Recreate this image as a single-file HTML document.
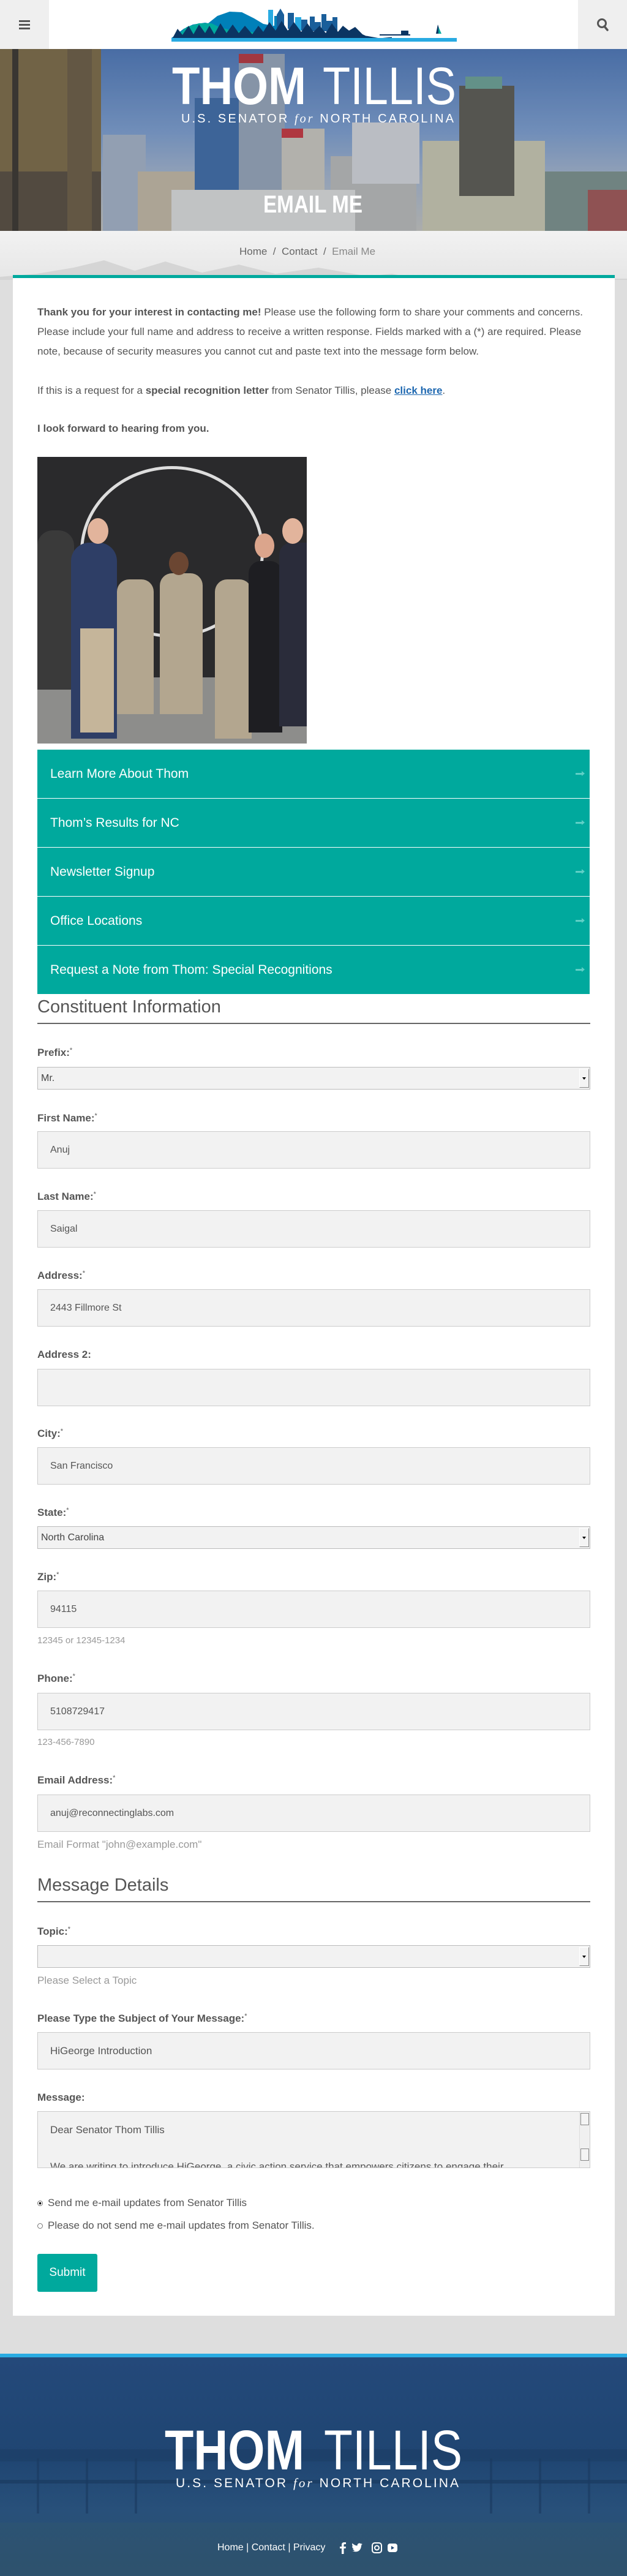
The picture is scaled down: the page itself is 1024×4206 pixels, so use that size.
<!DOCTYPE html>
<html><head><meta charset="utf-8">
<style>
*{margin:0;padding:0;box-sizing:border-box}
body{width:1024px;height:4206px;background:#dedede;position:relative;overflow:hidden;font-family:"Liberation Sans Narrow","Liberation Sans",sans-serif;color:#555}
.abs{position:absolute}
.hdr{left:0;top:0;width:1024px;height:80px;background:#fff}
.gbox{top:0;width:80px;height:80px;background:#efefef}
.hero{left:0;top:80px;width:1024px;height:297px;overflow:hidden;background:linear-gradient(#4f74ad,#7f9cc6 45%,#a9b4c4 70%,#c8c2b5)}
.bc{left:0;top:377px;width:1024px;height:80px;background:linear-gradient(#f2f2f2,#e6e6e6)}
.card{left:21px;top:449px;width:983px;height:3332px;background:#fff;border-top:5px solid #00a99d}
.p{left:61px;width:910px;font-size:17px;line-height:32px;color:#555}
.btn{left:61px;width:902px;height:79px;background:#00a99d;color:#fff;font-size:21px;line-height:79px;padding-left:21px}
.btn i{position:absolute;right:12px;top:38px;width:11px;height:3px;background:#5fcfc6}
.btn i:after{content:"";position:absolute;right:-4px;top:-3px;border-left:5px solid #5fcfc6;border-top:4.5px solid transparent;border-bottom:4.5px solid transparent}
.h2{left:61px;width:903px;font-size:29px;color:#555;border-bottom:2px solid #666;height:auto}
.lbl{left:61px;font-size:17px;font-weight:bold;color:#555}
.lbl sup{font-size:11px;font-weight:normal;vertical-align:6px}
.inp{left:61px;width:903px;height:61px;background:#f2f2f2;border:1px solid #ccc;font-family:"Liberation Sans",sans-serif;font-size:16px;color:#555;line-height:59px;padding-left:20px}
.sel{left:61px;width:903px;height:37px;background:#f2f2f2;border:1px solid #bbb;font-family:"Liberation Sans",sans-serif;font-size:16px;color:#444;line-height:35px;padding-left:5px}
.sel b{position:absolute;right:1px;top:2px;width:16px;height:31px;background:#f4f4f4;border:1px solid #888;border-top-color:#fff;border-left-color:#fff}
.sel b:after{content:"";position:absolute;left:4px;top:13px;border-top:4px solid #000;border-left:3px solid transparent;border-right:3px solid transparent}
.hint{left:61px;font-family:"Liberation Sans",sans-serif;font-size:15px;color:#999}
.hintn{left:61px;font-size:17px;color:#999}
.foot{left:0;top:3843px;width:1024px;height:363px;background:linear-gradient(#24497a,#1f4572 45%,#28507a 70%,#2c4f6a);border-top:6px solid #29abe2}
</style></head><body>

<div class="abs hdr"></div>
<div class="abs gbox" style="left:0"><div class="abs" style="left:31px;top:33px;width:18px;height:3px;background:#555;box-shadow:0 6px 0 #555,0 12px 0 #555"></div></div>
<div class="abs gbox" style="left:944px">
<svg class="abs" style="left:30px;top:29px" width="22" height="24" viewBox="0 0 22 24"><circle cx="9" cy="9" r="6.5" fill="none" stroke="#555" stroke-width="3"/><path d="M13 14l5 6" stroke="#555" stroke-width="3.5" stroke-linecap="round"/></svg></div>

<svg class="abs" style="left:280px;top:12px" width="466" height="58" viewBox="0 0 466 58">
<path d="M0 50 L20 35 L35 28 L55 25 L60 26 L75 14 L95 7 L115 8 L135 18 L150 27 L165 30 L170 30 L180 38 L200 50Z" fill="#0080b9"/>
<path d="M5 50 L25 32 L45 26 L65 26 L80 33 L100 38 L130 40 L150 45 L130 50Z" fill="#00a99d"/>
<rect x="158" y="4" width="8" height="30" fill="#29abe2"/><rect x="168" y="14" width="6" height="22" fill="#0080b9"/>
<path d="M172 34V12l6-10 6 10v22z" fill="#1a5e9a"/><rect x="190" y="9" width="10" height="26" fill="#1a5e9a"/>
<rect x="202" y="16" width="10" height="22" fill="#29abe2"/><rect x="212" y="20" width="10" height="18" fill="#1a5e9a"/>
<rect x="226" y="15" width="8" height="24" fill="#1a5e9a"/><rect x="234" y="24" width="10" height="16" fill="#1a5e9a"/>
<rect x="245" y="11" width="8" height="28" fill="#1a5e9a"/><rect x="253" y="22" width="10" height="18" fill="#1a5e9a"/><rect x="263" y="16" width="8" height="22" fill="#1a5e9a"/>
<path d="M2 50 L10 35 L18 45 L28 30 L36 44 L45 28 L55 42 L62 30 L70 44 L80 26 L90 42 L100 28 L110 42 L120 30 L132 44 L142 30 L150 40 L160 24 L170 38 L180 22 L190 38 L200 24 L212 40 L222 26 L232 40 L242 30 L252 42 L262 26 L272 40 L280 30 L290 38 L300 32 L312 44 L325 50 Z" fill="#0b3563"/>
<path d="M318 48 L340 52 L360 50" stroke="#0b3563" stroke-width="3" fill="none"/>
<rect x="340" y="44" width="50" height="2" fill="#0b3563"/><rect x="375" y="38" width="12" height="6" fill="#0b3563"/>
<path d="M432 43 L435 28 L440 43Z" fill="#0b3563"/><path d="M436 32 L441 43 L436 43Z" fill="#00a99d"/>
<rect x="0" y="50" width="466" height="6" fill="#29abe2"/>
</svg>

<div class="abs hero">
<svg width="1024" height="297" viewBox="0 0 1024 297">
<rect x="0" y="0" width="165" height="297" fill="#5b4a32"/>
<rect x="0" y="0" width="165" height="200" fill="#8a6f3c" opacity=".8"/>
<rect x="20" y="0" width="10" height="297" fill="#3c3122"/><rect x="110" y="0" width="40" height="297" fill="#6f5a38"/>
<rect x="168" y="140" width="70" height="157" fill="#a9b1bd"/>
<rect x="225" y="200" width="100" height="97" fill="#c9b79a"/>
<rect x="318" y="80" width="140" height="217" fill="#416a9e"/>
<rect x="390" y="8" width="75" height="289" fill="#9aa4b0"/><rect x="390" y="8" width="40" height="15" fill="#b33"/>
<rect x="460" y="130" width="70" height="167" fill="#d0c7b6"/><rect x="460" y="130" width="35" height="15" fill="#c33"/>
<rect x="540" y="175" width="140" height="122" fill="#bfbab0"/>
<rect x="575" y="120" width="110" height="100" fill="#d9d6d2"/>
<rect x="280" y="230" width="300" height="67" fill="#e2ddd4"/>
<rect x="690" y="150" width="200" height="147" fill="#cfc7a8"/>
<rect x="750" y="60" width="90" height="180" fill="#5e5746"/><rect x="760" y="45" width="60" height="20" fill="#6fa08a"/>
<rect x="890" y="200" width="134" height="97" fill="#7f8f82"/><rect x="960" y="230" width="64" height="67" fill="#a5544a"/>
<rect x="0" y="0" width="1024" height="297" fill="#2d4f80" opacity=".18"/>
<g fill="#fff">
<text x="281" y="90" font-family="Liberation Sans Narrow,Liberation Sans,sans-serif" font-weight="bold" font-size="86" textLength="219" lengthAdjust="spacingAndGlyphs">THOM</text>
<text x="527" y="90" font-family="Liberation Sans Narrow,Liberation Sans,sans-serif" font-size="86" textLength="218" lengthAdjust="spacingAndGlyphs" style="font-weight:100">TILLIS</text>
<text x="296" y="120" font-family="Liberation Sans Narrow,Liberation Sans,sans-serif" font-size="20" textLength="445" lengthAdjust="spacing">U.S. SENATOR <tspan font-style="italic" font-family="Liberation Serif,serif">for</tspan> NORTH CAROLINA</text>
<text x="430" y="267" font-family="Liberation Sans Narrow,Liberation Sans,sans-serif" font-weight="bold" font-size="40" textLength="162" lengthAdjust="spacingAndGlyphs">EMAIL ME</text>
</g></svg></div>

<div class="abs bc">
<svg class="abs" style="left:0;top:30px" width="1024" height="50" viewBox="0 0 1024 50"><path d="M0 45 L60 40 L120 30 L170 18 L220 35 L270 20 L330 38 L390 25 L450 40 L520 30 L600 44 L640 40 L680 48 L1024 48 L1024 50 L0 50Z" fill="#cfcfcf" opacity=".8"/></svg>
<div class="abs" style="left:391px;top:24px;font-size:17px;color:#666;white-space:nowrap">Home&nbsp; / &nbsp;Contact&nbsp; / &nbsp;<span style="color:#888">Email Me</span></div>
</div>

<div class="abs card"></div>

<div class="abs p" style="top:494px"><b>Thank you for your interest in contacting me!</b> Please use the following form to share your comments and concerns. Please include your full name and address to receive a written response. Fields marked with a (*) are required. Please note, because of security measures you cannot cut and paste text into the message form below.</div>
<div class="abs p" style="top:622px">If this is a request for a <b>special recognition letter</b> from Senator Tillis, please <a style="color:#1d67b0;font-weight:bold;text-decoration:underline">click here</a>.</div>
<div class="abs p" style="top:684px"><b>I look forward to hearing from you.</b></div>

<div class="abs" style="left:61px;top:746px;width:440px;height:468px;background:#2a2a2c;overflow:hidden">
<div class="abs" style="left:70px;top:15px;width:300px;height:280px;border:5px solid #ddd;border-radius:50%"></div>
<div class="abs" style="left:0;top:360px;width:440px;height:108px;background:#8d8d8b"></div>
<div class="abs" style="left:0;top:120px;width:60px;height:260px;background:#3a3a3a;border-radius:25px 25px 0 0"></div>
<div class="abs" style="left:55px;top:140px;width:75px;height:320px;background:#2e3e66;border-radius:30px 30px 0 0"></div>
<div class="abs" style="left:70px;top:280px;width:55px;height:170px;background:#c5b59a"></div>
<div class="abs" style="left:130px;top:200px;width:60px;height:220px;background:#b3a68f;border-radius:20px 20px 0 0"></div>
<div class="abs" style="left:200px;top:190px;width:70px;height:230px;background:#b3a68f;border-radius:20px 20px 0 0"></div>
<div class="abs" style="left:290px;top:200px;width:60px;height:260px;background:#b3a68f;border-radius:20px 20px 0 0"></div>
<div class="abs" style="left:345px;top:170px;width:55px;height:280px;background:#1e1e22;border-radius:20px 20px 0 0"></div>
<div class="abs" style="left:395px;top:140px;width:45px;height:300px;background:#2a2c3a;border-radius:20px 0 0 0"></div>
<div class="abs" style="left:82px;top:100px;width:34px;height:42px;background:#e2b49c;border-radius:50%"></div>
<div class="abs" style="left:400px;top:100px;width:34px;height:42px;background:#e2b49c;border-radius:50%"></div>
<div class="abs" style="left:355px;top:125px;width:32px;height:40px;background:#dba58c;border-radius:50%"></div>
<div class="abs" style="left:215px;top:155px;width:32px;height:38px;background:#6b4632;border-radius:50%"></div>
</div>

<div class="abs btn" style="top:1224px">Learn More About Thom<i></i></div>
<div class="abs btn" style="top:1304px">Thom’s Results for NC<i></i></div>
<div class="abs btn" style="top:1384px">Newsletter Signup<i></i></div>
<div class="abs btn" style="top:1464px">Office Locations<i></i></div>
<div class="abs btn" style="top:1544px;height:79px">Request a Note from Thom: Special Recognitions<i></i></div>

<div class="abs h2" style="top:1628px;height:44px">Constituent Information</div>

<div class="abs lbl" style="top:1709px">Prefix:<sup>*</sup></div>
<div class="abs sel" style="top:1742px">Mr.<b></b></div>
<div class="abs lbl" style="top:1816px">First Name:<sup>*</sup></div>
<div class="abs inp" style="top:1847px">Anuj</div>
<div class="abs lbl" style="top:1944px">Last Name:<sup>*</sup></div>
<div class="abs inp" style="top:1976px">Saigal</div>
<div class="abs lbl" style="top:2073px">Address:<sup>*</sup></div>
<div class="abs inp" style="top:2105px">2443 Fillmore St</div>
<div class="abs lbl" style="top:2202px">Address 2:</div>
<div class="abs inp" style="top:2235px"></div>
<div class="abs lbl" style="top:2331px">City:<sup>*</sup></div>
<div class="abs inp" style="top:2363px">San Francisco</div>
<div class="abs lbl" style="top:2460px">State:<sup>*</sup></div>
<div class="abs sel" style="top:2492px">North Carolina<b></b></div>
<div class="abs lbl" style="top:2565px">Zip:<sup>*</sup></div>
<div class="abs inp" style="top:2597px">94115</div>
<div class="abs hint" style="top:2670px">12345 or 12345-1234</div>
<div class="abs lbl" style="top:2731px">Phone:<sup>*</sup></div>
<div class="abs inp" style="top:2764px">5108729417</div>
<div class="abs hint" style="top:2836px">123-456-7890</div>
<div class="abs lbl" style="top:2897px">Email Address:<sup>*</sup></div>
<div class="abs inp" style="top:2930px">anuj@reconnectinglabs.com</div>
<div class="abs hintn" style="top:3002px">Email Format "john@example.com"</div>

<div class="abs h2" style="top:3062px;height:44px">Message Details</div>

<div class="abs lbl" style="top:3144px">Topic:<sup>*</sup></div>
<div class="abs sel" style="top:3176px"><b></b></div>
<div class="abs hintn" style="top:3224px">Please Select a Topic</div>
<div class="abs lbl" style="top:3286px">Please Type the Subject of Your Message:<sup>*</sup></div>
<div class="abs inp" style="top:3318px;font-family:'Liberation Sans Narrow','Liberation Sans',sans-serif;font-size:17px">HiGeorge Introduction</div>
<div class="abs lbl" style="top:3415px">Message:</div>
<div class="abs inp" style="top:3447px;height:93px;line-height:normal;padding-top:20px;overflow:hidden;font-family:'Liberation Sans Narrow','Liberation Sans',sans-serif;font-size:17px">Dear Senator Thom Tillis<div style="margin-top:40px">We are writing to introduce HiGeorge, a civic action service that empowers citizens to engage their</div>
<div class="abs" style="right:0;top:0;width:17px;height:91px;background:#f0f0f0;border-left:1px solid #ddd"><div class="abs" style="left:1px;top:2px;width:14px;height:20px;border:1px solid #888;background:#f4f4f4"></div><div class="abs" style="left:1px;top:60px;width:14px;height:20px;border:1px solid #888;background:#f4f4f4"></div></div></div>

<div class="abs" style="left:61px;top:3587px;font-size:17px;color:#555;white-space:nowrap"><span style="display:inline-block;width:9px;height:9px;border:1px solid #777;border-radius:50%;background:radial-gradient(#000 35%,#fff 40%);margin-right:8px"></span>Send me e-mail updates from Senator Tillis</div>
<div class="abs" style="left:61px;top:3624px;font-size:17px;color:#555;white-space:nowrap"><span style="display:inline-block;width:9px;height:9px;border:1px solid #777;border-radius:50%;margin-right:8px"></span>Please do not send me e-mail updates from Senator Tillis.</div>

<div class="abs" style="left:61px;top:3680px;width:98px;height:62px;background:#00a99d;border-radius:3px;color:#fff;font-size:19px;line-height:62px;text-align:center">Submit</div>

<div class="abs foot">
<svg class="abs" style="left:0;top:0" width="1024" height="357" viewBox="0 0 1024 357">
<rect x="0" y="150" width="1024" height="20" fill="#1c3e66" opacity=".6"/>
<rect x="0" y="200" width="1024" height="6" fill="#1a3a60" opacity=".7"/>
<g fill="#1a3a60" opacity=".6"><rect x="60" y="165" width="4" height="90"/><rect x="140" y="165" width="4" height="90"/><rect x="220" y="165" width="4" height="90"/><rect x="800" y="165" width="4" height="90"/><rect x="880" y="165" width="4" height="90"/><rect x="960" y="165" width="4" height="90"/></g>
<rect x="0" y="270" width="1024" height="87" fill="#2f5570" opacity=".5"/>
<g fill="#fff">
<text x="269" y="183" font-family="Liberation Sans Narrow,Liberation Sans,sans-serif" font-weight="bold" font-size="92" textLength="228" lengthAdjust="spacingAndGlyphs">THOM</text>
<text x="529" y="183" font-family="Liberation Sans Narrow,Liberation Sans,sans-serif" font-size="92" textLength="226" lengthAdjust="spacingAndGlyphs" style="font-weight:100">TILLIS</text>
<text x="287" y="212" font-family="Liberation Sans Narrow,Liberation Sans,sans-serif" font-size="21" textLength="462" lengthAdjust="spacing">U.S. SENATOR <tspan font-style="italic" font-family="Liberation Serif,serif">for</tspan> NORTH CAROLINA</text>
</g></svg>
<div class="abs" style="left:355px;top:302px;font-size:16px;color:#fff;white-space:nowrap">Home | Contact | Privacy</div>
<svg class="abs" style="left:550px;top:300px" width="120" height="22" viewBox="0 0 120 22">
<path d="M8 21V12H5V9h3V6c0-3 2-4 4-4h3v3h-2c-1 0-1.5.5-1.5 1.5V9H15l-.5 3H11.5v9z" fill="#fff"/>
<path d="M26 16c3 2 8 2 11-1 2-2 3-5 3-8l2-2-2 .5 1.5-2-2 1c-2-2-6-1-6 3-3 0-6-2-8-4-1 2 0 4 1 5h-1.5c0 2 1 3 3 4h-2c.5 1.5 2 2.5 3.5 2.5-1.5 1-3 1.5-5 1z" fill="#fff"/>
<rect x="58" y="3" width="15" height="16" rx="4" fill="none" stroke="#fff" stroke-width="2"/><circle cx="65.5" cy="11" r="3.5" fill="none" stroke="#fff" stroke-width="2"/>
<rect x="83" y="4" width="16" height="14" rx="4" fill="#fff"/><path d="M89 8v6l5-3z" fill="#1f4572"/>
</svg>
</div>
</body></html>
